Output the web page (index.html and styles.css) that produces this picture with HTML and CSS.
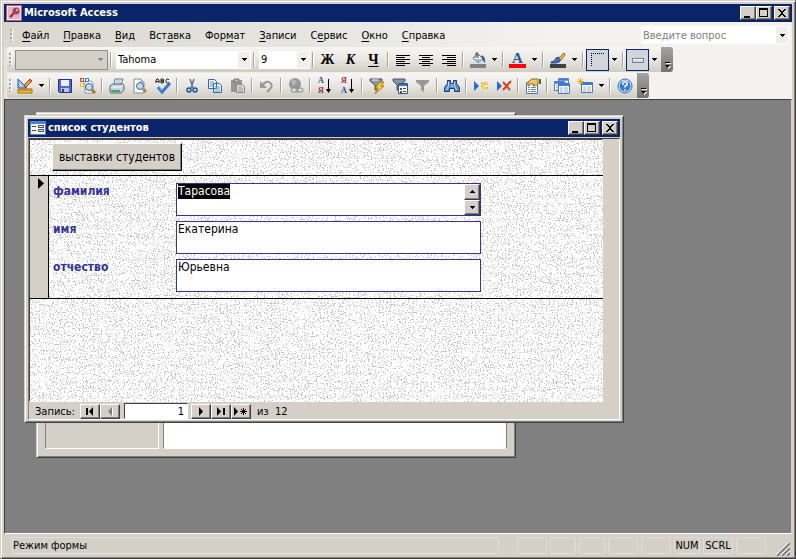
FILE: index.html
```html
<!DOCTYPE html>
<html lang="ru">
<head>
<meta charset="utf-8">
<title>Microsoft Access</title>
<link rel="stylesheet" href="styles.css">
</head>
<body>
<svg class="defs" aria-hidden="true">
  <defs>
    <symbol id="down" viewBox="0 0 5 3"><path d="M0 0h5v1H4v1H3v1H2V2H1V1H0z"/></symbol>
    <symbol id="min" viewBox="0 0 10 10"><path d="M1 8h6v2H1z"/></symbol>
    <symbol id="max" viewBox="0 0 10 10"><path d="M0 0h9v9H0zM1 2v6h7V2z" fill-rule="evenodd"/></symbol>
    <symbol id="close" viewBox="0 0 10 10"><path d="M1 1h2v1h1v1h2V2h1V1h2v1H8v1H7v1H6v2h1v1h1v1h1v1H7V8H6V7H4v1H3v1H1V8h1V7h1V6h1V4H3V3H2V2H1z"/></symbol>
    <symbol id="overflow" viewBox="0 0 7 8"><path d="M2 2h5v1H2zM2 5h5L4.500 8z" fill="#fff"/><path d="M1 1h5v1H1zM1 4h5L3.500 7z"/></symbol>
    <symbol id="lens" viewBox="0 0 16 16"><path d="M2 1h7l3 3v11H2z" fill="#fff" stroke="#7c8da8"/><path d="M9 1v3h3" fill="#dce6f5" stroke="#7c8da8"/><circle cx="8" cy="8" r="3.500" fill="#b9dcf6" stroke="#46658f"/><path d="M11 11l3 3" stroke="#d07b28" stroke-width="3"/></symbol>
    <symbol id="funnel" viewBox="0 0 16 16"><path d="M1 2h13v2L9 8v6l-3-2V8L1 4z"/></symbol>
    <symbol id="sheet" viewBox="0 0 12 11"><path d="M.5.5h11v10H.5z" fill="#fff" stroke="#4877bd"/><path d="M1 1h10v2H1z" fill="#3c78d8"/><path d="M2 5h3M6 5h4M2 7h3M6 7h4M2 9h3M6 9h4" stroke="#93b0dc"/></symbol>
  </defs>
</svg>
<div class="app">
  <header class="title">
    <svg class="appicon" viewBox="0 0 16 16"><path d="M0 0h16v16H0z" fill="#b15e77"/><path d="M1 1h14v14H1z" fill="#f5e5e9"/><path d="M2 2h12v12H2z" fill="#dfb6c2"/><path d="M8 8l-4 4M5 11l1 1" stroke="#91243f" stroke-width="2"/><circle cx="10" cy="6" r="3.500" fill="#a7405d"/><circle cx="11" cy="5" r="1" fill="#f0cbd5"/></svg>
    <h1>Microsoft Access</h1>
    <div class="winbtns">
      <button aria-label="Свернуть"><svg><use href="#min"/></svg></button><button aria-label="Развернуть"><svg><use href="#max"/></svg></button><button class="x" aria-label="Закрыть"><svg><use href="#close"/></svg></button>
    </div>
  </header>
  <nav class="menu">
    <i class="grip"></i>
    <button><u>Ф</u>айл</button><button><u>П</u>равка</button><button><u>В</u>ид</button><button>Вст<u>а</u>вка</button><button>Фор<u>м</u>ат</button><button><u>З</u>аписи</button><button>С<u>е</u>рвис</button><button><u>О</u>кно</button><button><u>С</u>правка</button>
    <div class="combo ask"><input aria-label="Введите вопрос" placeholder="Введите вопрос"><button aria-label="Список вопросов"><svg class="dn"><use href="#down"/></svg></button></div>
  </nav>
  <div class="bar">
    <div class="tools">
      <i class="grip"></i>
      <div class="combo object off"><input aria-label="Объект" disabled><button aria-label="Выбрать объект" disabled><svg class="dn"><use href="#down"/></svg></button></div>
      <i class="sep"></i>
      <div class="combo font"><input aria-label="Шрифт" value="Tahoma"><button aria-label="Выбрать шрифт"><svg class="dn"><use href="#down"/></svg></button></div>
      <i class="sep"></i>
      <div class="combo size"><input aria-label="Размер" value="9"><button aria-label="Выбрать размер"><svg class="dn"><use href="#down"/></svg></button></div>
      <i class="sep"></i>
      <button class="tb letter">Ж</button>
      <button class="tb letter italic">К</button>
      <button class="tb letter under">Ч</button>
      <i class="sep"></i>
      <button class="tb" aria-label="По левому краю"><svg viewBox="0 0 16 16"><path d="M1 3.500h14M1 5.500h9M1 7.500h14M1 9.500h9M1 11.500h14M1 13.500h9" stroke="#000"/></svg></button>
      <button class="tb" aria-label="По центру"><svg viewBox="0 0 16 16"><path d="M1 3.500h14M4 5.500h8M1 7.500h14M4 9.500h8M1 11.500h14M4 13.500h8" stroke="#000"/></svg></button>
      <button class="tb" aria-label="По правому краю"><svg viewBox="0 0 16 16"><path d="M1 3.500h14M6 5.500h9M1 7.500h14M6 9.500h9M1 11.500h14M6 13.500h9" stroke="#000"/></svg></button>
      <i class="sep"></i>
      <button class="tb" aria-label="Цвет заливки"><svg viewBox="0 0 16 16"><path d="M0 12h16v4H0z" fill="#808080"/><path d="M3 6l5-4 5 5-5 4z" fill="#fff" stroke="#58718f"/><path d="M4 7h8l-4 4z" fill="#9dbbe3"/><path d="M6 6V1q2-1 2 1v4" fill="none" stroke="#444"/><path d="M11 3q5 1 4 8-2-1-3-5z" fill="#2d62ad"/></svg></button>
      <button class="drop" aria-label="Палитра заливки"><svg class="dn"><use href="#down"/></svg></button>
      <i class="sep"></i>
      <button class="tb fontcolor" aria-label="Цвет текста">А</button>
      <button class="drop" aria-label="Палитра текста"><svg class="dn"><use href="#down"/></svg></button>
      <i class="sep"></i>
      <button class="tb" aria-label="Цвет линии"><svg viewBox="0 0 16 16"><path d="M0 12h16v4H0z" fill="#404040"/><path d="M1 10q4 0 5-4l3-1 2 2q-1 4-5 4H1z" fill="#3971c3" stroke="#284f91"/><path d="M9 6l5-5 1 2-4 5z" fill="#f4bd43" stroke="#9a681c"/></svg></button>
      <button class="drop" aria-label="Палитра линии"><svg class="dn"><use href="#down"/></svg></button>
      <i class="sep"></i>
      <button class="tb on" aria-label="Толщина линии"><svg viewBox="0 0 16 16"><path d="M1 1.500h14M1.500 1v14" stroke="#000" stroke-dasharray="1 1" fill="none"/></svg></button>
      <button class="drop" aria-label="Выбрать толщину"><svg class="dn"><use href="#down"/></svg></button>
      <i class="sep"></i>
      <button class="tb on" aria-label="Оформление"><svg viewBox="0 0 16 16"><path d="M2 6h12v5H2z" fill="#788297"/><path d="M3 7h10v3H3z" fill="#d8d8dc"/><path d="M3 7h10v1H3z" fill="#fff"/></svg></button>
      <button class="drop" aria-label="Выбрать оформление"><svg class="dn"><use href="#down"/></svg></button>
      <button class="cap" aria-label="Параметры панели"><svg><use href="#overflow"/></svg></button>
    </div>
  </div>
  <div class="bar">
    <div class="tools">
      <i class="grip"></i>
      <button class="tb" aria-label="Вид"><svg viewBox="0 0 16 16"><path d="M1 1v9h9z" fill="#9dc4f5" stroke="#245bb5"/><path d="M3 6v2h2z" fill="#fff"/><path d="M1 11h14v4H1z" fill="#fbc631" stroke="#9f6b13"/><path d="M3 12v1m2-1v1m2-1v1m2-1v1m2-1v1m2-1v1" stroke="#7b5010"/><path d="M7 9l1-3 5-5 2 2-5 5z" fill="#f0a33c" stroke="#885126"/><path d="M12 2l2 2" stroke="#cf4d38"/></svg></button>
      <button class="drop" aria-label="Выбрать вид"><svg class="dn"><use href="#down"/></svg></button>
      <i class="sep"></i>
      <button class="tb" aria-label="Сохранить"><svg viewBox="0 0 16 16"><path d="M1.500 1.500h13v13h-12l-1-1z" fill="#506ad0" stroke="#292c8c"/><path d="M4 2h8v6H4z" fill="#e9effb"/><path d="M4 10h8v4H4z" fill="#b9c4df"/><path d="M5 11h2v3H5z" fill="#29398f"/></svg></button>
      <button class="tb" aria-label="Поиск файлов"><svg viewBox="0 0 16 16"><path d="M5 3h6l2 2v10H5z" fill="#fff" stroke="#8495ae"/><path d="M0 0h4v4H0z" fill="#e2401b"/><path d="M5 0h4v4H5z" fill="#2d7fd2"/><path d="M0 5h4v4H0z" fill="#f6bf24"/><path d="M1 1h2v2H1zM6 1h2v2H6zM1 6h2v2H1z" fill="#fff"/><circle cx="9" cy="9" r="3.500" fill="#c1e0f8" stroke="#3e5a83"/><path d="M12 12l3 3" stroke="#bd6c2b" stroke-width="3"/></svg></button>
      <i class="sep"></i>
      <button class="tb" aria-label="Печать"><svg viewBox="0 0 16 16"><path d="M5 7l1-6h8l-2 6z" fill="#fff" stroke="#61728a"/><path d="M7 3h5M7 5h5" stroke="#91a5c2"/><path d="M1 8l3-2h10l1 2v4l-3 3H2l-1-2z" fill="#c6d3e5" stroke="#536780"/><path d="M2 9h10l2-2" stroke="#fff" fill="none"/><path d="M2 12h9v2H3z" fill="#45a848"/></svg></button>
      <button class="tb" aria-label="Предварительный просмотр"><svg><use href="#lens"/></svg></button>
      <button class="tb" aria-label="Орфография"><svg viewBox="0 0 16 16"><path d="M1 5V2l1-1h1l1 1v3M1 3.500h3M6 5V1h2l1 1-1 1H6h2l1 1-1 1zM14 2l-1-1h-1l-1 1v2l1 1h1l1-1" fill="none" stroke="#222"/><path d="M3 9l4 5 8-9" fill="none" stroke="#3975cf" stroke-width="3"/><path d="M4 9l3 4" stroke="#85b3ec"/></svg></button>
      <i class="sep"></i>
      <button class="tb" aria-label="Вырезать"><svg viewBox="0 0 16 16"><path d="M6 1l3 9M10 1L7 10" stroke="#5f7697" stroke-width="1.500"/><circle cx="5" cy="12" r="2" fill="none" stroke="#1953a4" stroke-width="1.500"/><circle cx="11" cy="12" r="2" fill="none" stroke="#1953a4" stroke-width="1.500"/></svg></button>
      <button class="tb" aria-label="Копировать"><svg viewBox="0 0 16 16"><path d="M1.500 1.500h6l2 2v7h-8zM6.500 5.500h6l2 2v7h-8z" fill="#eaf2ff" stroke="#3765ac"/><path d="M3 4h4M3 6h3M3 8h3M8 9h5M8 11h5M8 13h5" stroke="#6998d7"/></svg></button>
      <button class="tb" aria-label="Вставить" disabled><svg viewBox="0 0 16 16"><path d="M1 2h11v12H1z" fill="#969696"/><path d="M4 1h5v3H4z" fill="#bbb" stroke="#777"/><path d="M6.500 6.500h6l2 2v6h-8z" fill="#ddd" stroke="#888"/><path d="M8 9h4M8 11h5M8 13h5" stroke="#999"/></svg></button>
      <i class="sep"></i>
      <button class="tb" aria-label="Отменить" disabled><svg viewBox="0 0 16 16"><path d="M4 7q2-4 6-3 5 3 1 7l-3 3" fill="none" stroke="#999" stroke-width="2"/><path d="M1 3v7h7z" fill="#999"/></svg></button>
      <i class="sep"></i>
      <button class="tb" aria-label="Гиперссылка" disabled><svg viewBox="0 0 16 16"><circle cx="7" cy="6" r="6" fill="#999"/><path d="M3 3q4-3 6 1l-4 4z" fill="#b8b8b8"/><rect x="3" y="10" width="7" height="4" rx="2" fill="#ddd" stroke="#888"/><rect x="8" y="10" width="7" height="4" rx="2" fill="none" stroke="#888"/></svg></button>
      <i class="sep"></i>
      <button class="tb sort" aria-label="По возрастанию"><span><b>А</b><b class="red">Я</b></span><svg viewBox="0 0 5 16"><path d="M2 1h1v10h2l-2.500 4L0 11h2z"/></svg></button>
      <button class="tb sort" aria-label="По убыванию"><span><b class="red">Я</b><b>А</b></span><svg viewBox="0 0 5 16"><path d="M2 1h1v10h2l-2.500 4L0 11h2z"/></svg></button>
      <i class="sep"></i>
      <button class="tb" aria-label="Фильтр по выделенному"><svg viewBox="0 0 16 16"><path d="M1 1h12v2L9 7v5H6V7L1 3z" fill="#8999a5" stroke="#465562"/><path d="M3 2h6" stroke="#fff"/><path d="M11 4h4l-3 4h3l-9 8 3-6H6z" fill="#ffcb2d" stroke="#ad761b"/></svg></button>
      <button class="tb" aria-label="Изменить фильтр"><svg viewBox="0 0 16 16"><path d="M1 1h12v2L8 7v5H5V7L1 3z" fill="#8999a5" stroke="#465562"/><path d="M6.500 5.500h9v10h-9z" fill="#fff" stroke="#315180"/><path d="M7 6h8v2H7z" fill="#3974cd"/><path d="M8 10h2v2H8zM8 13h2v2H8z" fill="#555"/><path d="M11 10.500h3M11 13.500h3" stroke="#444"/></svg></button>
      <button class="tb" aria-label="Применение фильтра" disabled><svg fill="#999"><use href="#funnel"/></svg></button>
      <i class="sep"></i>
      <button class="tb" aria-label="Найти"><svg viewBox="0 0 16 16"><path d="M3.500 2.500h3v3h3v-3h3v3l3 4v4h-5v-3h-5v3h-5v-4l3-4z" fill="#5c8ad0" stroke="#173d7b"/><path d="M4.500 4v4l-2 4M10.500 4v4l2 4M8 6v3" stroke="#c9dff9" fill="none"/></svg></button>
      <i class="sep"></i>
      <button class="tb" aria-label="Новая запись"><svg viewBox="0 0 16 16"><path d="M1 3l5 5-5 5z" fill="#2668d8"/><path d="M8 4h2v2h1V4h2v2h2v1h-2v2h2v2h-2V9h-1v2h-2V9H8V7h2V6H8zM14 4h1v1h-1z" fill="#f6bd22"/><path d="M10 7h3v2h-3z" fill="#fff3a2"/></svg></button>
      <button class="tb" aria-label="Удалить запись"><svg viewBox="0 0 16 16"><path d="M1 3l5 5-5 5z" fill="#2668d8"/><path d="M7 4l7 8M15 3l-8 9" stroke="#e0401d" stroke-width="2"/></svg></button>
      <i class="sep"></i>
      <button class="tb" aria-label="Свойства"><svg viewBox="0 0 16 16"><path d="M1.500 4.500h11v11h-11z" fill="#fff" stroke="#50719e"/><path d="M3 9.500h2M6 9.500h5M3 11.500h2M6 11.500h5M3 13.500h2M6 13.500h5" stroke="#6889b5"/><path d="M3 4l4-3h6v5l-4 2H8l1-2H5l-1 2H3z" fill="#f3c762" stroke="#956824"/><path d="M14 1h2v5h-2z" fill="#38782f"/></svg></button>
      <i class="sep"></i>
      <button class="tb" aria-label="Окно базы данных"><svg viewBox="0 0 16 16"><use href="#sheet" x="4" y="0" width="11" height="10"/><use href="#sheet" x="0" y="3" width="11" height="10"/><use href="#sheet" x="4" y="5" width="12" height="11"/></svg></button>
      <button class="tb" aria-label="Новый объект"><svg viewBox="0 0 16 16"><use href="#sheet" x="4" y="4" width="12" height="11"/><path d="M3.500 0v7M0 3.500h7M1 1l5 5M6 1L1 6" stroke="#efb117"/></svg></button>
      <button class="drop" aria-label="Выбрать объект"><svg class="dn"><use href="#down"/></svg></button>
      <i class="sep"></i>
      <button class="tb" aria-label="Справка"><svg viewBox="0 0 16 16"><circle cx="8" cy="8" r="7" fill="#e6f1ff" stroke="#2a65bd"/><circle cx="8" cy="8" r="5.500" fill="#327ce0"/><path d="M6 7V5l1-1h2l1 1v2L8 8v1.500M8 11v1.500" fill="none" stroke="#fff" stroke-width="1.500"/></svg></button>
      <button class="cap" aria-label="Параметры панели"><svg><use href="#overflow"/></svg></button>
    </div>
  </div>
  <main class="desk">
    <section class="win back" aria-label="База данных"><div class="pane side"></div><div class="pane list"></div></section>
    <section class="win front">
      <header class="title">
        <svg class="formicon" viewBox="0 0 16 14"><path d="M0 0h16v14H0z" fill="#4f83ca"/><path d="M1 3h14v10H1z" fill="#f4f6fa"/><path d="M2 5h4v1H2zM2 9h4v1H2z" fill="#444"/><path d="M8.500 4.500h5v2h-5zM8.500 8.500h5v2h-5z" fill="#fff" stroke="#444"/></svg>
        <h2>список студентов</h2>
        <div class="winbtns">
          <button aria-label="Свернуть форму"><svg><use href="#min"/></svg></button><button aria-label="Развернуть форму"><svg><use href="#max"/></svg></button><button class="x" aria-label="Закрыть форму"><svg><use href="#close"/></svg></button>
        </div>
      </header>
      <div class="client">
        <form class="paper">
          <svg class="grain" aria-hidden="true">
            <filter id="sand" x="0" y="0" width="100%" height="100%" color-interpolation-filters="sRGB">
              <feTurbulence type="fractalNoise" baseFrequency="0.73 0.87" numOctaves="1" seed="4" result="fine"/>
              <feTurbulence type="fractalNoise" baseFrequency="0.06 0.17" numOctaves="1" seed="9" result="wave"/>
              <feComposite in="fine" in2="wave" operator="arithmetic" k2="0.87" k3="0.13"/>
              <feColorMatrix values="0 0 0 0 0.78  0 0 0 0 0.78  0 0 0 0 0.78  60 0 0 0 -35"/>
            </filter>
            <rect width="100%" height="100%" filter="url(#sand)"/>
          </svg>
          <div class="head"><button type="button" class="cmd">выставки студентов</button></div>
          <div class="detail">
            <div class="selector"><svg viewBox="0 0 6 11"><path d="M0 0l6 5.500L0 11z"/></svg></div>
            <div class="fields">
              <label for="f1">фамилия</label>
              <div class="field"><textarea id="f1">Тарасова</textarea><div class="spin"><button type="button" aria-label="Вверх"><svg class="dn up"><use href="#down"/></svg></button><button type="button" aria-label="Вниз"><svg class="dn"><use href="#down"/></svg></button></div></div>
              <label for="f2">имя</label>
              <div class="field"><textarea id="f2">Екатерина</textarea></div>
              <label for="f3">отчество</label>
              <div class="field"><textarea id="f3">Юрьевна</textarea></div>
            </div>
          </div>
        </form>
        <div class="nav">
          <label for="rec">Запись:</label>
          <button aria-label="Первая"><svg viewBox="0 0 14 9"><path d="M3 1h2v7H3zM10 0v9L6 4.500z"/></svg></button><button aria-label="Предыдущая" disabled><svg viewBox="0 0 14 9"><path d="M10 1v8L6 5.500z" fill="#fff"/><path d="M9 0v9L5 4.500z" fill="#808080"/></svg></button>
          <input id="rec" value="1">
          <button aria-label="Следующая"><svg viewBox="0 0 14 9"><path d="M5 0v9l4-4.500z"/></svg></button><button aria-label="Последняя"><svg viewBox="0 0 14 9"><path d="M3 0v9l4-4.500zM9 1h2v7H9z"/></svg></button><button aria-label="Новая"><svg viewBox="0 0 14 9"><path d="M0 0v9l4-4.500z"/><path d="M9.500 1v7M6 4.500h7M7 2l5 5M12 2L7 7" stroke="#000"/></svg></button>
          <span>из&nbsp; 12</span>
        </div>
      </div>
    </section>
  </main>
  <footer class="status">
    <span class="mode">Режим формы</span><span class="w31"></span><span class="w25"></span><span class="w25"></span><span class="w31"></span><span class="w31"></span><span class="w25">NUM</span><span class="w31">SCRL</span><span class="w31"></span>
    <svg class="size-grip" viewBox="0 0 14 14"><path d="M1 14L14 1M6 14l8-8M11 14l3-3" stroke="#808080" stroke-width="2"/><path d="M0 13L13 0M5 13l9-9M10 13l4-4" stroke="#fff"/></svg>
  </footer>
</div>
<script src="script.js"></script>
</body>
</html>
```
FILE: styles.css
```css
* { box-sizing: border-box; }
body { margin: 0; background: #d4d0c8; font: 11px/13px "DejaVu Sans Condensed", "DejaVu Sans", sans-serif; color: #000; }
button, input, textarea { font: inherit; color: inherit; margin: 0; padding: 0; border: 0; background: none; border-radius: 0; outline: 0; }
button { display: flex; align-items: center; justify-content: center; flex: none; }
svg { display: block; flex: none; }
h1, h2 { margin: 0; font-size: 11px; line-height: 18px; }
.defs { position: absolute; width: 0; height: 0; }

.app { height: 100vh; display: flex; flex-direction: column; padding: 2px; border: 1px solid; border-color: #d4d0c8 #404040 #404040 #d4d0c8; box-shadow: inset 1px 1px #fff, inset -1px -1px #808080; }
.title { display: flex; align-items: center; height: 18px; background: #0a246a; color: #fff; flex: none; }
.app > .title { margin: 1px 1px 0; padding: 0 2px; }
.appicon { width: 16px; height: 16px; margin-right: 2px; }
.formicon { width: 16px; height: 14px; margin: 0 2px; }
.winbtns { display: flex; margin-left: auto; }
.winbtns button { width: 16px; height: 14px; background: #d4d0c8; color: #000; border: 1px solid; border-color: #fff #404040 #404040 #fff; box-shadow: inset -1px -1px #808080; }
.winbtns .x { margin-left: 2px; }
.winbtns svg { width: 10px; height: 10px; }

.menu { display: flex; align-items: center; height: 25px; flex: none; margin: 0 1px; padding: 1px 3px 0; background: linear-gradient(90deg, #d9d6cf, #f3f2ef 70%); }
.menu > button { padding: 0 7px; height: 18px; }
.menu u { text-underline-offset: 2px; }
.grip { width: 3px; height: 13px; margin: 0 3px; flex: none; background: repeating-linear-gradient(#a8a49c 0 2px, transparent 2px 4px); border-right: 1px solid #fff; }
.menu .grip { margin-right: 2px; }
.combo { display: flex; height: 18px; background: #fff; margin-left: 2px; flex: none; }
.combo input { flex: 1; min-width: 0; padding: 0 2px; }
.combo button { width: 12px; margin: 1px; background: #efeeeb; }
.combo.ask { width: 148px; margin-left: auto; }
.ask input::placeholder { color: #808080; opacity: 1; }
.object { width: 93px; }
.font { width: 135px; }
.size { width: 51px; }
.combo.off { height: 20px; background: #d4d0c8; border: 1px solid #918f8a; }
.off button { background: none; fill: #808080; }
.dn { width: 5px; height: 3px; }
.up { transform: rotate(180deg); }

.bar { display: flex; height: 26px; flex: none; margin: 0 1px; padding: 0 3px; background: linear-gradient(90deg, #e4e2dd, #f3f2ef 60%); }
.tools { display: flex; align-items: center; height: 25px; background: linear-gradient(#f7f6f4, #e9e7e2 50%, #cfccc3); border-radius: 3px; }
.tools .grip { margin: 0 1px 0 2px; }
.sep { width: 6px; height: 15px; flex: none; background: linear-gradient(90deg, transparent 2px, #a6a297 2px 3px, #fff 3px 4px, transparent 4px); }
.tb { width: 23px; height: 22px; }
.tb svg { width: 16px; height: 16px; }
.drop { width: 11px; height: 22px; }
.on { background: #d3d5dc; border: 1px solid #0a246a; }
.letter { font: bold 14px/16px "Liberation Serif", serif; }
.italic { font-style: italic; }
.under { text-decoration: underline; text-underline-offset: 2px; }
.fontcolor { height: 16px; width: 17px; margin: 0 3px; font: bold 15px/12px "Liberation Serif", serif; color: #2a559d; border-bottom: 4px solid #f00; }
.sort span { display: grid; gap: 1px; }
.sort b { font: bold 8px/9px "Liberation Serif", serif; color: #1d4b9b; }
.sort .red { color: #9c2f3a; }
.tb.sort svg { width: 5px; margin-left: 2px; }
.cap { width: 12px; height: 25px; margin-left: 1px; padding: 0 2px 3px 3px; align-items: flex-end; border-radius: 0 3px 3px 0; background: linear-gradient(#a5a39d, #757575); }
.cap svg { width: 7px; height: 8px; }

.desk { position: relative; flex: 1; margin: 0 1px; background: #808080; border: 1px solid; border-color: #404040 #d4d0c8 #fff #404040; overflow: hidden; }
.win { position: absolute; display: flex; background: #d4d0c8; border: 1px solid; border-color: #d4d0c8 #404040 #404040 #d4d0c8; box-shadow: inset 1px 1px #fff, inset -1px -1px #808080; }
.back { left: 31px; top: 12px; width: 480px; height: 346px; padding: 24px 8px 8px; gap: 4px; }
.pane { border: 1px solid; border-color: #808080 #fff #fff #808080; }
.side { width: 114px; }
.list { flex: 1; background: #fff; border-right-color: #808080; }
.front { left: 19px; top: 15px; width: 600px; height: 308px; flex-direction: column; padding: 3px 3px 2px; }
.front .title { padding-right: 2px; }
.client { flex: 1; display: flex; flex-direction: column; margin-top: 1px; padding: 1px 0 0 1px; border: 1px solid; border-color: #404040 #fff #fff #808080; }
.paper { position: relative; flex: 1; background: #fff; margin-right: 16px; box-shadow: -1px -1px #404040; }
.grain { position: absolute; inset: 0; width: 100%; height: 100%; }
.head, .detail { position: relative; border-bottom: 1px solid #000; }
.head { height: 36px; padding: 3px 22px; }
.cmd { height: 28px; padding: 0 6px; font-size: 12px; background: #d4d0c8; border: 1px solid; border-color: #fff #000 #000 #fff; box-shadow: inset -1px -1px #808080; }
.detail { display: flex; height: 123px; }
.selector { width: 19px; padding: 2px 0 0 8px; background: #d4d0c8; border-right: 1px solid #000; }
.selector svg { width: 6px; height: 11px; }
.fields { display: grid; grid-template-columns: 123px 305px; grid-auto-rows: 33px; gap: 5px 0; padding: 7px 4px; font-size: 12px; line-height: 15px; }
.fields label { color: #339; font-weight: bold; padding-top: 1px; }
.field { display: flex; background: #fff; border: 1px solid #339; }
.field textarea { flex: 1; resize: none; overflow: hidden; padding: 0 1px; line-height: 15px; }
.field ::selection { background: #000; color: #fff; }
.spin { display: grid; width: 16px; }
.spin button, .nav button { background: #d4d0c8; border: 1px solid; border-color: #fff #404040 #404040 #fff; box-shadow: inset -1px -1px #808080; }
.nav { display: flex; align-items: center; height: 17px; flex: none; padding: 1px 0 0 5px; }
.nav label { width: 45px; }
.nav button { width: 20px; height: 15px; }
.nav button svg { width: 14px; height: 9px; }
.nav input { width: 64px; height: 16px; margin: 0 3px 0 4px; padding-right: 3px; background: #fff; text-align: right; border: 1px solid; border-color: #404040 #fff #fff #404040; }
.nav span { margin-left: 6px; }

.status { display: flex; align-items: center; height: 22px; flex: none; padding: 1px 3px 0 9px; gap: 3px; }
.status span { height: 17px; line-height: 15px; border: 1px solid #e0ddd6; text-align: center; flex: none; }
.status .mode { flex: 1; text-align: left; margin-right: 15px; }
.w25 { width: 26px; }
.w31 { width: 30px; }
.size-grip { width: 14px; height: 14px; margin-left: 7px; align-self: flex-end; }
```
FILE: script.js
```js
const first = document.getElementById("f1");
first.focus();
first.select();
```
